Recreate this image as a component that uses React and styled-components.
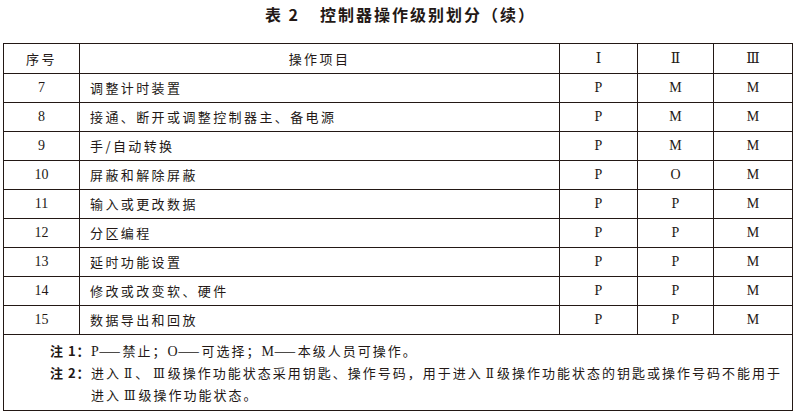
import React from 'react';
import styled, { createGlobalStyle } from 'styled-components';

const GlobalStyle = createGlobalStyle`
  html, body {
    margin: 0;
    padding: 0;
    background: #ffffff;
  }
  body {
    width: 796px;
    height: 416px;
    overflow: hidden;
    color: #231815;
    font-family: "Liberation Serif", "Noto Sans CJK SC", serif;
  }
`;

const Page = styled.div`
  display: flex;
  flex-direction: column;
  padding: 3px 4px 0 3px;
`;

const Title = styled.h1`
  margin: 0;
  height: 40px;
  display: flex;
  justify-content: center;
  gap: 20px;
  font-family: "Noto Sans CJK SC", sans-serif;
  font-weight: 700;
  font-size: 16px;
  line-height: 22px;
  letter-spacing: 2px;
  color: #231815;
  padding-left: 6px;
`;

const Table = styled.table`
  width: 789px;
  border-collapse: collapse;
  table-layout: fixed;
  font-size: 14px;
`;

const Cell = styled.td`
  border: 1px solid #231815;
  height: ${(p) => (p.$head ? 30 : 29)}px;
  box-sizing: border-box;
  padding: 0;
  padding-left: ${(p) => (p.$left ? '10px' : '0')};
  line-height: 18px;
  text-align: ${(p) => (p.$left ? 'left' : 'center')};
  vertical-align: middle;
  font-size: ${(p) => (p.$cjk ? '13px' : '14px')};
  letter-spacing: ${(p) => (p.$cjk ? '2.4px' : '0')};
  font-family: ${(p) =>
    p.$cjk ? '"Noto Sans CJK SC", sans-serif' : '"Liberation Serif", "DejaVu Serif", serif'};
  white-space: nowrap;
`;

const RomanHead = styled.span`
  font-family: "DejaVu Serif", "Liberation Serif", serif;
  font-size: 14px;
`;

const NoteCell = styled.td`
  border: 1px solid #231815;
  padding: 5px 0 4px 46px;
  font-family: "Noto Sans CJK SC", sans-serif;
  font-size: 13px;
  line-height: 22px;
  letter-spacing: 2px;
  white-space: nowrap;
`;

const NoteLine = styled.div`
  display: flex;
  height: 22px;
  align-items: center;
  padding-left: ${(p) => (p.$indent ? '41px' : '0')};
`;

const NoteLabel = styled.span`
  font-weight: 700;
  width: 41px;
  flex: none;
  letter-spacing: 1px;
`;

const Latin = styled.span`
  font-family: "Liberation Serif", serif;
  font-size: 14px;
  letter-spacing: 0;
`;

const Dash = styled.span`
  letter-spacing: 0;
  margin-right: 2px;
`;

const Roman = styled.span`
  font-family: "DejaVu Serif", "Liberation Serif", serif;
  letter-spacing: 0;
  font-size: 12px;
  margin: 0 3px;
`;

const rows = [
  ['7', '调整计时装置', 'P', 'M', 'M'],
  ['8', '接通、断开或调整控制器主、备电源', 'P', 'M', 'M'],
  ['9', '手/自动转换', 'P', 'M', 'M'],
  ['10', '屏蔽和解除屏蔽', 'P', 'O', 'M'],
  ['11', '输入或更改数据', 'P', 'P', 'M'],
  ['12', '分区编程', 'P', 'P', 'M'],
  ['13', '延时功能设置', 'P', 'P', 'M'],
  ['14', '修改或改变软、硬件', 'P', 'P', 'M'],
  ['15', '数据导出和回放', 'P', 'P', 'M'],
];

export default function App() {
  return (
    <Page>
      <GlobalStyle />
      <Title>
        <span>表 2</span>
        <span>控制器操作级别划分（续）</span>
      </Title>
      <Table>
        <colgroup>
          <col style={{ width: 76 }} />
          <col style={{ width: 480 }} />
          <col style={{ width: 78 }} />
          <col style={{ width: 76 }} />
          <col style={{ width: 79 }} />
        </colgroup>
        <tbody>
          <tr>
            <Cell $head $cjk>序号</Cell>
            <Cell $head $cjk>操作项目</Cell>
            <Cell $head><RomanHead>Ⅰ</RomanHead></Cell>
            <Cell $head><RomanHead>Ⅱ</RomanHead></Cell>
            <Cell $head><RomanHead>Ⅲ</RomanHead></Cell>
          </tr>
          {rows.map((r) => (
            <tr key={r[0]}>
              <Cell>{r[0]}</Cell>
              <Cell $cjk $left>{r[1]}</Cell>
              <Cell>{r[2]}</Cell>
              <Cell>{r[3]}</Cell>
              <Cell>{r[4]}</Cell>
            </tr>
          ))}
          <tr>
            <NoteCell colSpan={5}>
              <NoteLine>
                <NoteLabel>注 1：</NoteLabel>
                <span>
                  <Latin>P</Latin><Dash>——</Dash>禁止；<Latin>O</Latin><Dash>——</Dash>可选择；<Latin>M</Latin><Dash>——</Dash>本级人员可操作。
                </span>
              </NoteLine>
              <NoteLine>
                <NoteLabel>注 2：</NoteLabel>
                <span>
                  进入<Roman>Ⅱ</Roman>、<Roman>Ⅲ</Roman>级操作功能状态采用钥匙、操作号码，用于进入<Roman>Ⅱ</Roman>级操作功能状态的钥匙或操作号码不能用于
                </span>
              </NoteLine>
              <NoteLine $indent>
                <span>
                  进入<Roman>Ⅲ</Roman>级操作功能状态。
                </span>
              </NoteLine>
            </NoteCell>
          </tr>
        </tbody>
      </Table>
    </Page>
  );
}
